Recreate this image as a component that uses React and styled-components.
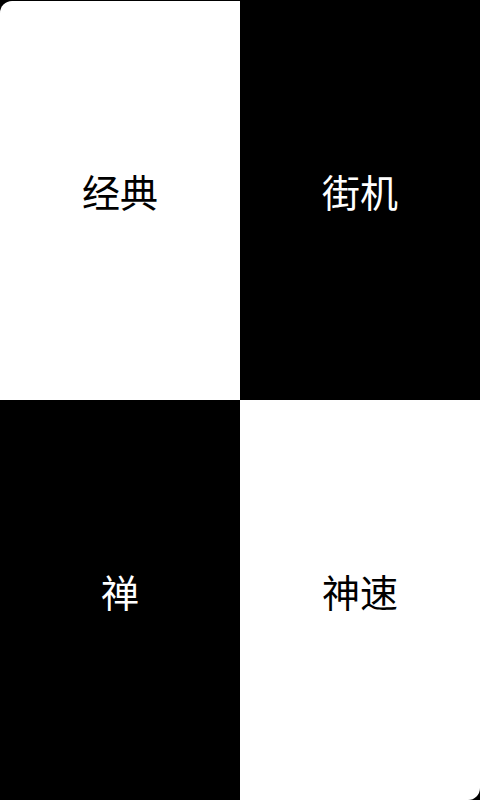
import styled, { createGlobalStyle } from "styled-components";

const Global = createGlobalStyle`
  html, body {
    margin: 0;
    padding: 0;
    background: #000;
  }
  body {
    font-family: "Noto Sans CJK SC", "Noto Sans", sans-serif;
  }
`;

const modes = [
  { name: "经典", light: true },
  { name: "街机", light: false },
  { name: "禅", light: false },
  { name: "神速", light: true },
];

const Board = styled.div`
  width: 480px;
  height: 800px;
  padding-top: 1px;
  box-sizing: border-box;
  display: grid;
  grid-template-columns: 240px 240px;
  grid-template-rows: 399px 400px;
  background: #000;
  overflow: hidden;
`;

const Tile = styled.div`
  display: flex;
  align-items: center;
  justify-content: center;
  padding-bottom: 20px;
  box-sizing: border-box;
  background: ${({ $light }) => ($light ? "#fff" : "#000")};
  color: ${({ $light }) => ($light ? "#000" : "#fff")};
  font-size: 38px;
  font-weight: 400;
  border-radius: ${({ $corner }) => $corner || "0"};
`;

export default function App() {
  const corners = ["12px 0 0 0", "0", "0", "0 0 12px 0"];
  return (
    <>
      <Global />
      <Board>
        {modes.map((m, i) => (
          <Tile key={m.name} $light={m.light} $corner={corners[i]}>
            {m.name}
          </Tile>
        ))}
      </Board>
    </>
  );
}
